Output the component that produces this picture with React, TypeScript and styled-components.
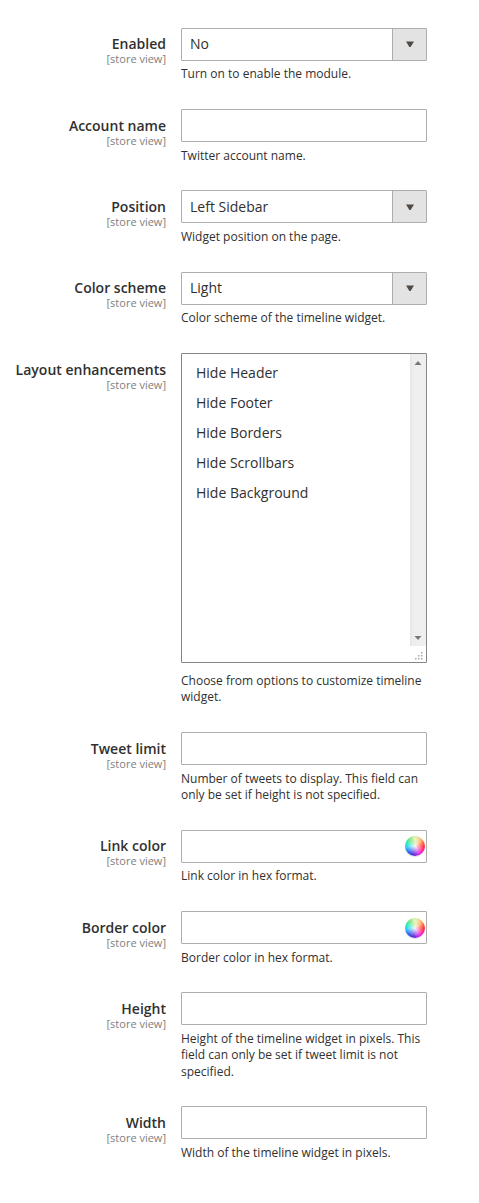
import React from "react";
import styled, { createGlobalStyle } from "styled-components";

const GlobalStyle = createGlobalStyle`
  *, *::before, *::after { box-sizing: border-box; }
  body {
    margin: 0;
    background: #fff;
    color: #303030;
    font: 400 14px/1.36 "Open Sans", "Noto Sans", sans-serif;
  }
`;

const Form = styled.form`
  width: 479px;
  height: 1203px;
  padding-top: 27.8px;
  overflow: hidden;
`;

const Field = styled.div`
  display: grid;
  grid-template-columns: 166px 246px;
  column-gap: 15px;
  margin-bottom: 26.3px;
`;

const Label = styled.div`
  padding-top: 6.6px;
  text-align: right;
  font-weight: 600;
  line-height: 19px;
  white-space: nowrap;
`;

const Scope = styled.span`
  display: block;
  margin-top: -2px;
  color: #808080;
  font-size: 11px;
  font-weight: 400;
  line-height: 15px;
`;

const Note = styled.p<{ $gap?: number }>`
  margin: ${(p) => p.$gap ?? 5.7}px 0 0;
  font-size: 12px;
  line-height: 16.32px;
`;

const Box = styled.div`
  display: flex;
  align-items: center;
  justify-content: space-between;
  height: 33px;
  border: 1px solid #adadad;
  border-radius: 1px;
  background: #fff;
`;

const Value = styled.span`
  padding: 0 0 1px 8px;
`;

const Trigger = styled.span`
  display: flex;
  align-items: center;
  justify-content: center;
  width: 34px;
  height: 31px;
  border-left: 1px solid #adadad;
  background: #e3e3e3;
`;

const ListBox = styled.div`
  position: relative;
  display: flex;
  justify-content: space-between;
  height: 310px;
  border: 1px solid #858585;
  border-radius: 1px;
`;

const Options = styled.ul`
  margin: 0;
  padding: 4px 0 0 14px;
  list-style: none;
`;

const Option = styled.li`
  height: 30px;
  line-height: 30px;
`;

const Scrollbar = styled.div`
  display: flex;
  flex-direction: column;
  align-items: center;
  justify-content: space-between;
  width: 16px;
  height: 292px;
  padding: 7px 0 6px;
  background: linear-gradient(to right, #e6e6e6, #eeeeee 3px, #efefef);
`;

const Grip = styled.svg`
  position: absolute;
  right: 3px;
  bottom: 2px;
`;

const Wheel = styled.span`
  width: 20px;
  height: 20px;
  margin: 0.5px 1px 0 0;
  border-radius: 50%;
  background:
    radial-gradient(ellipse 9px 6px at 50% 12%, rgba(255, 255, 255, 0.6), rgba(255, 255, 255, 0)),
    radial-gradient(circle at 50% 52%, rgba(255, 255, 255, 0.95), rgba(255, 255, 255, 0) 62%),
    conic-gradient(#c8e860, #ffa050 50deg, #ff3030 90deg, #ff20a0 125deg, #d020f0 155deg, #4c20d0 190deg, #2858f0 225deg, #20d0ff 265deg, #30f0a0 300deg, #60d850 330deg, #c8e860);
  box-shadow: 0 1px 1px rgba(0, 0, 0, 0.15);
`;

type FieldData = {
  label: string;
  note: string;
  kind?: "text" | "select" | "list" | "color";
  value?: string;
};

const fields: FieldData[] = [
  { label: "Enabled", note: "Turn on to enable the module.", kind: "select", value: "No" },
  { label: "Account name", note: "Twitter account name." },
  { label: "Position", note: "Widget position on the page.", kind: "select", value: "Left Sidebar" },
  { label: "Color scheme", note: "Color scheme of the timeline widget.", kind: "select", value: "Light" },
  { label: "Layout enhancements", note: "Choose from options to customize timeline widget.", kind: "list" },
  { label: "Tweet limit", note: "Number of tweets to display. This field can only be set if height is not specified." },
  { label: "Link color", note: "Link color in hex format.", kind: "color" },
  { label: "Border color", note: "Border color in hex format.", kind: "color" },
  { label: "Height", note: "Height of the timeline widget in pixels. This field can only be set if tweet limit is not specified." },
  { label: "Width", note: "Width of the timeline widget in pixels." },
];

const options = ["Hide Header", "Hide Footer", "Hide Borders", "Hide Scrollbars", "Hide Background"];

const gripDots = [[6, 0], [3, 3], [6, 3], [0, 6], [3, 6], [6, 6]];

function Control({ kind, value }: FieldData) {
  if (kind === "list") {
    return (
      <ListBox>
        <Options>
          {options.map((o) => <Option key={o}>{o}</Option>)}
        </Options>
        <Scrollbar>
          <svg width="8" height="4"><path d="M0.5 4L4 0L7.5 4Z" fill="#777" /></svg>
          <svg width="8" height="4"><path d="M0.5 0H7.5L4 4Z" fill="#777" /></svg>
        </Scrollbar>
        <Grip width="8" height="8">
          {gripDots.map(([x, y]) => <rect key={`${x}-${y}`} x={x} y={y} width="1.5" height="1.5" fill="#a8a8a8" />)}
        </Grip>
      </ListBox>
    );
  }
  return (
    <Box>
      <Value>{value}</Value>
      {kind === "select" && (
        <Trigger>
          <svg width="8" height="6"><path d="M0 0.5H8L4.6 6H3.4Z" fill="#514943" /></svg>
        </Trigger>
      )}
      {kind === "color" && <Wheel />}
    </Box>
  );
}

export default function App() {
  return (
    <>
      <GlobalStyle />
      <Form>
        {fields.map((f) => (
          <Field key={f.label}>
            <Label>
              {f.label}
              <Scope>[store view]</Scope>
            </Label>
            <div>
              <Control {...f} />
              <Note $gap={f.kind === "list" ? 10.1 : undefined}>{f.note}</Note>
            </div>
          </Field>
        ))}
      </Form>
    </>
  );
}
